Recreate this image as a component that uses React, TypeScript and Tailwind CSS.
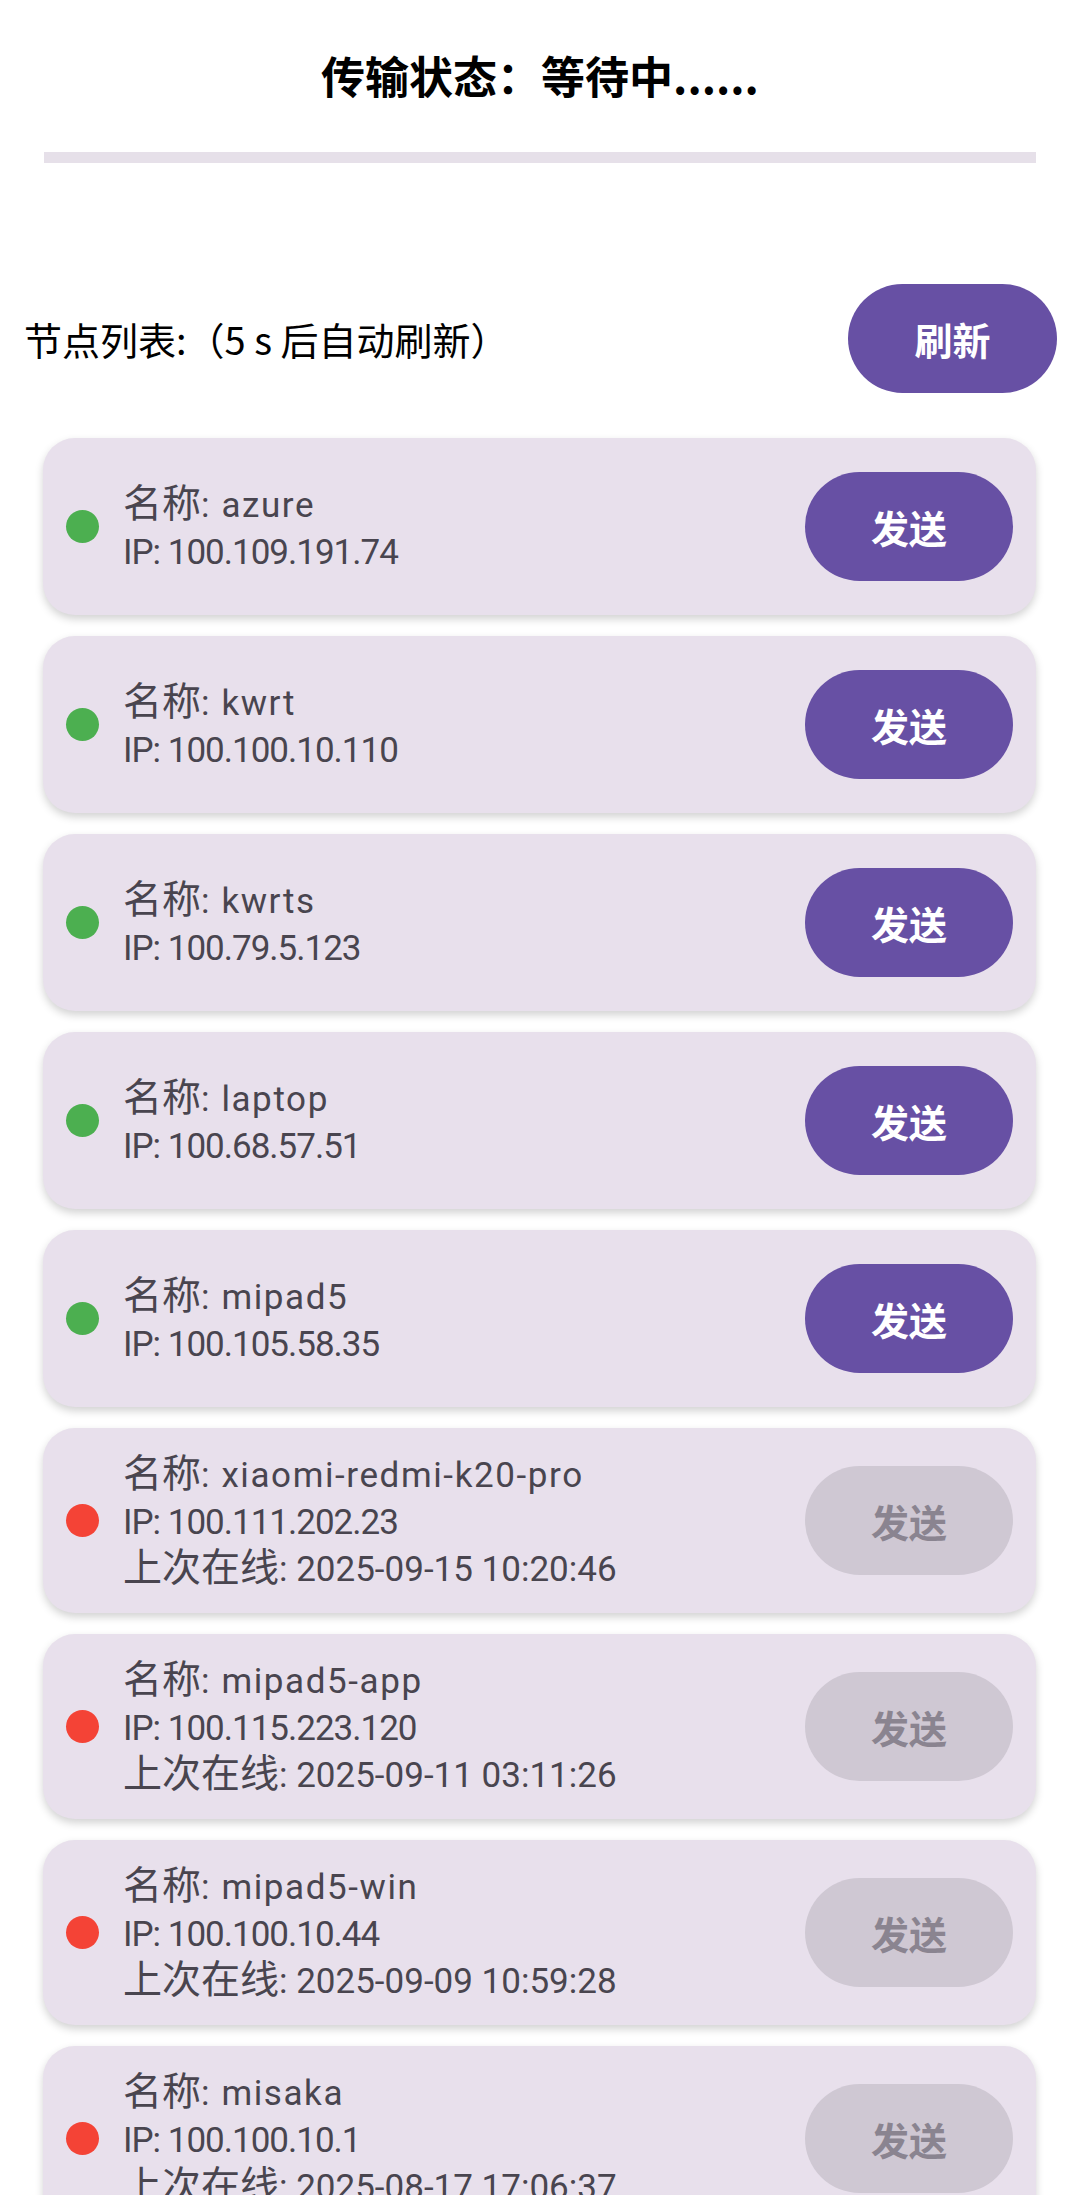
import React from "react"

type Node = {
	name: string
	ip: string
	online: boolean
	lastSeen?: string
}

const nodes: Node[] = [
	{ name: "azure", ip: "100.109.191.74", online: true },
	{ name: "kwrt", ip: "100.100.10.110", online: true },
	{ name: "kwrts", ip: "100.79.5.123", online: true },
	{ name: "laptop", ip: "100.68.57.51", online: true },
	{ name: "mipad5", ip: "100.105.58.35", online: true },
	{ name: "xiaomi-redmi-k20-pro", ip: "100.111.202.23", online: false, lastSeen: "2025-09-15 10:20:46" },
	{ name: "mipad5-app", ip: "100.115.223.120", online: false, lastSeen: "2025-09-11 03:11:26" },
	{ name: "mipad5-win", ip: "100.100.10.44", online: false, lastSeen: "2025-09-09 10:59:28" },
	{ name: "misaka", ip: "100.100.10.1", online: false, lastSeen: "2025-08-17 17:06:37" },
]

const cjk = "font-['Noto_Sans_CJK_SC',sans-serif]"
const latin = "font-['Roboto','Noto_Sans_CJK_SC',sans-serif] text-[35px]"

const NodeCard = ({ node }: { node: Node }) => (
	<div className="bg-[#e8e0ec] rounded-[32px] shadow-[0_4px_8px_rgba(0,0,0,0.18)] flex items-center px-[23px] py-[22px]">
		<div className={`w-[33px] h-[33px] rounded-full shrink-0 ${node.online ? "bg-[#4caf50]" : "bg-[#f44336]"}`} />
		{/* small nudge up so the lines sit like the original */}
		<div className="flex-1 ml-[24px] -translate-y-[3px] text-[39px] text-[#49454f] whitespace-nowrap">
			<div className="h-[47px] leading-[47px]">
				名称<span className={`${latin} tracking-[1.6px]`}>: {node.name}</span>
			</div>
			<div className="h-[47px] leading-[47px]">
				<span className={`${latin} tracking-[-1px]`}>IP: {node.ip}</span>
			</div>
			{node.lastSeen && (
				<div className="h-[47px] leading-[47px]">
					上次在线<span className={latin}>: {node.lastSeen}</span>
				</div>
			)}
		</div>
		<button
			disabled={!node.online}
			className={`w-[208px] h-[109px] my-[12px] ml-[12px] shrink-0 rounded-full text-[38px] font-semibold flex items-center justify-center ${
				node.online ? "bg-[#6750a4] text-white" : "bg-[#cfc8d3] text-[#8a8490]"
			}`}
		>
			发送
		</button>
	</div>
)

const App = () => {
	return (
		<div className={`w-full min-h-screen bg-white ${cjk}`}>
			{/* transfer status */}
			<div className="pt-[45px] h-[105px] flex items-center justify-center text-[44px] font-bold text-black leading-none">
				传输状态：等待中......
			</div>
			<div className="mx-[44px] mt-[47px] h-[11px] bg-[#e6e0e9]" />

			{/* list header */}
			<div className="mt-[121px] pl-[24px] pr-[23px] flex items-center justify-between">
				<div className="text-[38px] text-black whitespace-nowrap">节点列表:（5 s 后自动刷新）</div>
				<button className="w-[209px] h-[109px] rounded-full bg-[#6750a4] text-white text-[38px] font-semibold flex items-center justify-center">
					刷新
				</button>
			</div>

			{/* nodes */}
			<div className="mt-[45px] ml-[43px] mr-[44px] flex flex-col gap-[21px] pb-[40px]">
				{nodes.map((n) => (
					<NodeCard node={n} key={n.name} />
				))}
			</div>
		</div>
	)
}

export default App
